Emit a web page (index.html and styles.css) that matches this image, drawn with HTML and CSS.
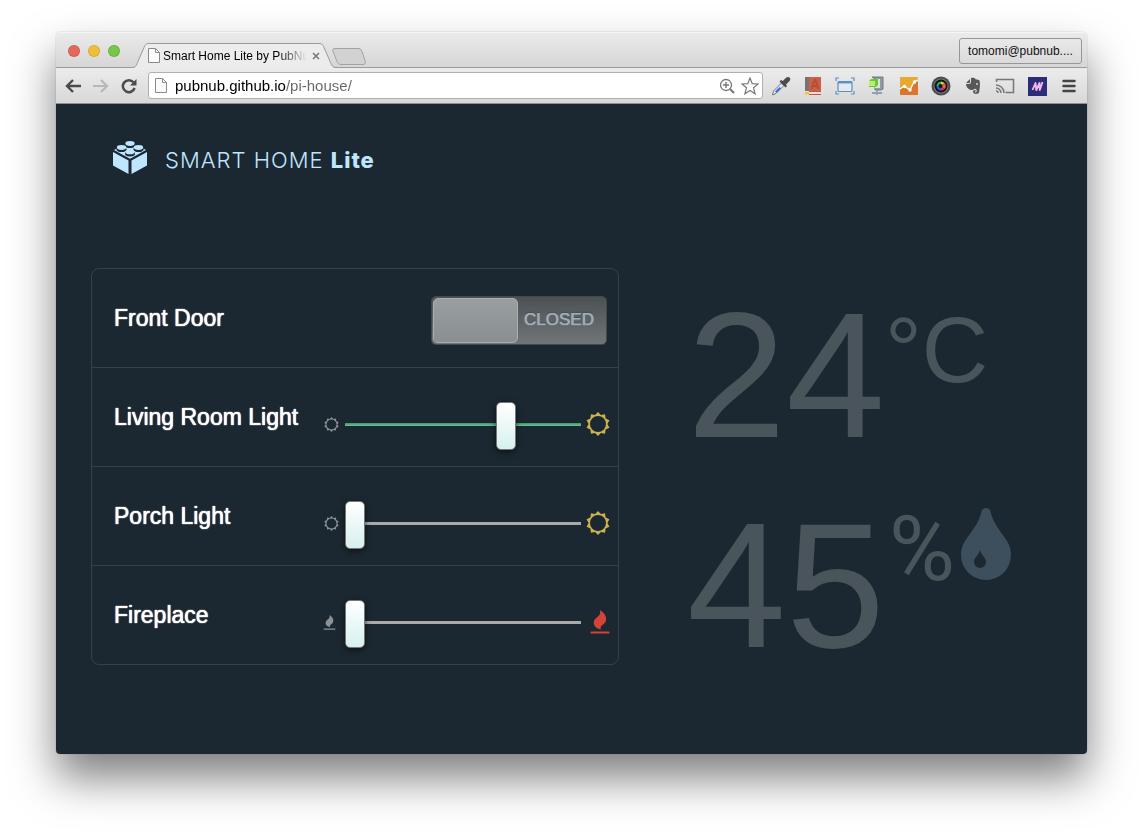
FILE: index.html
```html
<!DOCTYPE html>
<html lang="en">
<head>
  <meta charset="UTF-8" />
  <meta name="viewport" content="width=device-width, initial-scale=1" />
  <title>Smart Home Lite by PubNub</title>
  <link rel="stylesheet" href="styles.css">
</head>
<body>
  <!-- shared shapes -->
  <svg class="sprite" aria-hidden="true">
    <symbol id="page" viewBox="0 0 12 15">
      <path d="M.5.5h7l4 4v10H.5z" fill="#fbfbfb" stroke="#8a8a8a"/>
      <path d="M7.500.5v4h4" fill="none" stroke="#8a8a8a"/>
    </symbol>
    <symbol id="sun" viewBox="0 0 24 24">
      <path fill="currentColor" fill-rule="evenodd" d="M12 0L14.900 3.060 19.050 2.290 19.600 6.470 23.410 8.290 21.400 12 23.410 15.710 19.600 17.530 19.050 21.710 14.900 20.940 12 24 9.100 20.940 4.950 21.710 4.400 17.530.590 15.710 2.600 12 .590 8.290 4.400 6.470 4.950 2.290 9.100 3.060zM12 4a8 8 0 1 0 0 16 8 8 0 0 0 0-16z"/>
    </symbol>
    <symbol id="flame" viewBox="0 0 20 25">
      <path fill="currentColor" d="M9.800 0c4 2.500 7 5.500 6.500 10.500-.4 3.700-3.800 4.700-5.300 6.800-.6.900-.5 2 .1 3.200C6 19 3 16.500 3.500 12.500c.5-4 5.200-5.500 6.300-8.100.6-1.500.5-3 0-4.400z"/>
      <rect x="0" y="22.500" width="20" height="2" rx="1" fill="currentColor"/>
    </symbol>
  </svg>

  <div class="window">
    <div class="tabstrip">
      <div class="lights">
        <span class="light red"></span>
        <span class="light yellow"></span>
        <span class="light green"></span>
      </div>
      <div class="tab">
        <svg class="tab-shape" viewBox="0 0 211 26" aria-hidden="true">
          <path d="M0 25c4 0 5-1 6.500-5L13 4.500C14 1.500 15 .5 18 .5h170c3 0 4 1 5 4l6.500 15.500c1.500 4 3 5 7 5h4.500v1H0z" fill="#ececec"/>
          <path d="M0 24.500c4 0 5-1 6.500-5L13 4.500C14 1.500 15 .5 18 .5h170c3 0 4 1 5 4l6.500 15c1.500 4 3 5 7 5h4.500" fill="none" stroke="#9b9b9b"/>
        </svg>
        <svg class="page-icon"><use href="#page"/></svg>
        <span class="tab-title">Smart Home Lite by PubNub</span>
        <button class="tab-close" aria-label="Close tab">
          <svg width="8" height="8" viewBox="0 0 8 8"><path d="M1 1l6 6M7 1L1 7" stroke="#777" stroke-width="1.600"/></svg>
        </button>
      </div>
      <button class="new-tab" aria-label="New tab">
        <svg width="34" height="17" viewBox="0 0 34 17"><path d="M3 .5h23c2 0 3 .5 4 3l3 9c1 3 0 4-2 4H9c-2 0-3-1-4-3L1 3.500C.3 1.500 1 .5 3 .5z" fill="#d2d2d2" stroke="#a2a2a2"/></svg>
      </button>
      <button class="profile">tomomi@pubnub....</button>
    </div>

    <div class="toolbar">
      <div class="nav">
        <button aria-label="Back"><svg width="16" height="14" viewBox="0 0 16 14"><path d="M8 1L2 7l6 6M2 7h14" fill="none" stroke="#4b4b4b" stroke-width="2.400"/></svg></button>
        <button aria-label="Forward"><svg width="16" height="14" viewBox="0 0 16 14"><path d="M8 1l6 6-6 6M14 7H0" fill="none" stroke="#b8b8b8" stroke-width="2.200"/></svg></button>
        <button aria-label="Reload"><svg width="16" height="16" viewBox="0 0 16 16"><path d="M12.500 4.300A6 6 0 1 0 13.600 10" fill="none" stroke="#4b4b4b" stroke-width="2.500"/><path d="M15.500 1v6.500H9z" fill="#4b4b4b"/></svg></button>
      </div>
      <div class="omnibox">
        <svg class="page-icon"><use href="#page"/></svg>
        <input class="url" type="text" aria-label="Address" value="pubnub.github.io/pi-house/">
        <svg width="16" height="16" viewBox="0 0 16 16" fill="none" stroke="#777"><circle cx="7" cy="7" r="5.500" stroke-width="1.300"/><path d="M4 7h6M7 4v6" stroke-width="1.400"/><path d="M11 11l4 4" stroke-width="2.200"/></svg>
        <svg width="18" height="18" viewBox="0 0 18 18"><path d="M9 1l2.200 5.700 6 .3-4.700 3.800 1.600 6L9 13.400l-5.100 3.400 1.600-6L.8 7l6-.3z" fill="#fff" stroke="#777" stroke-width="1.200"/></svg>
      </div>
      <div class="extensions">
        <button aria-label="Color picker"><svg viewBox="0 0 20 20"><path d="M1.500 19l1-4 8-8 2.500 2.500-8 8z" fill="#dfe7f5" stroke="#777"/><path d="M4 15.500l4.500-4.500 1.500 1.500-4.500 4.500z" fill="#3e70dc"/><path d="M8.500 5.500l6 6 1.500-1.500-1-1.500 3.500-3.500c1.200-1.200.9-2.700 0-3.500s-2.200-.9-3.500.2L11.800 5l-1.800-1z" fill="#4c4c50"/></svg></button>
        <button aria-label="Dictionary"><svg viewBox="0 0 20 20"><path d="M2 1h16v14H2z" fill="#cd5f46"/><path d="M2 1h4v15H2z" fill="#777274"/><path d="M2 15h16v4H2z" fill="#e8dfda"/><path d="M6 15h12v1H6zM6 18h12v1H6z" fill="#c4563f"/><path d="M2 16h4v3l-2-1-2 1z" fill="#efc234"/><path d="M8.500 13l3-9h1l3 9M9.500 10h5" fill="none" stroke="#b14e3a" stroke-width="1.800"/></svg></button>
        <button aria-label="Window resizer"><svg viewBox="0 0 20 20" fill="none" stroke="#5c8fc4"><rect x="3" y="5.500" width="14" height="10" rx="1" fill="#e3e9ef" stroke-width="1.200"/><path d="M3 6.500h14" stroke-width="1.800"/><path d="M1 5V2h3M16 2h3v3M19 15v3h-3M4 18H1v-3" stroke-width="1.200"/></svg></button>
        <button aria-label="Download manager"><svg viewBox="0 0 20 20"><path d="M5 1h11v12l-2 1H8V3z" fill="#8d9ba2" stroke="#6c7b84"/><path d="M8 3h5v9H8z" fill="#d9e2e4"/><path d="M2 5l2-2h7v6l-2 2H2z" fill="#6cc92c"/><path d="M2 5h6v5H2z" fill="#b4ee78"/><path d="M10 14v5M5 17h10" stroke="#8fa2ae" stroke-width="1.800"/></svg></button>
        <button aria-label="Analytics"><svg viewBox="0 0 20 20"><rect x="1" y="1" width="18" height="18" rx="1" fill="#e8a92f"/><path d="M1 13l4-2 6 3 5-9 3-2v15c0 .6-.4 1-1 1H2c-.6 0-1-.4-1-1z" fill="#dd742d"/><path d="M1 13l4-3 6 4 4-8 4-2" fill="none" stroke="#fff" stroke-width="1.400"/><circle cx="5.500" cy="10.500" r="1.700" fill="#fff"/><circle cx="11" cy="14" r="1.700" fill="#fff"/><circle cx="15.500" cy="6" r="1.700" fill="#fff"/></svg></button>
        <button aria-label="Camera"><svg viewBox="0 0 20 20"><circle cx="10" cy="10" r="9.500" fill="#4b4c4e"/><circle cx="10" cy="10" r="7.500" fill="#77787b"/><circle cx="10" cy="10" r="6.500" fill="#151518"/><path d="M10 10V5.500a5 5 0 0 1 3.500 1.500z" fill="#e7ce30"/><path d="M10 10l3.500-3a4 4 0 0 1 0 6z" fill="#e5682e"/><path d="M10 10l3.500 3a5 5 0 0 1-4.500 1.500z" fill="#d72d91"/><path d="M10 10l-1 4.500A5 5 0 0 1 5.500 10z" fill="#2864dc"/><path d="M10 10H5.500A5 5 0 0 1 10 5.500z" fill="#24b769"/><circle cx="9.500" cy="10" r="2" fill="#101014"/></svg></button>
        <button aria-label="Clipper"><svg viewBox="0 0 20 20"><path d="M3 7l4-4v3c0 .6-.4 1-1 1zM8 2c2-.5 4 0 4.500 1.200 2 .2 3.500.4 4 1.300.8 3 .5 8-.5 12-.4 1.500-3.500 1.800-5 1-1.500-.9-1-3.500.5-3.500h1v1.400c-1.300 0-1.300 1 0 1 2 0 1.500-3.600-.5-3.600-1 0-1.200 1.200-2.500 1.200C6 14 3.500 12 3 8h3c1.200 0 2-.8 2-2z" fill="#585858"/><circle cx="14" cy="8" r=".9" fill="#ddd"/></svg></button>
        <button aria-label="Cast"><svg viewBox="0 0 20 20" fill="none" stroke="#777" stroke-width="1.500"><path d="M1.500 6V3.500h17v13h-8"/><path d="M1 9a8 8 0 0 1 8 8M1 12a5 5 0 0 1 5 5M1 15a2 2 0 0 1 2 2"/></svg></button>
        <button aria-label="Memo"><svg viewBox="0 0 20 20"><rect width="19" height="19" x="1" y="1" fill="#2c2c78"/><path d="M5.500 14L8.500 7l.8 7L12.500 7l.3 7L15.500 6" fill="none" stroke="#f0b4f0" stroke-width="1.900" stroke-linejoin="round"/></svg></button>
        <button aria-label="Menu"><svg viewBox="0 0 20 20"><path d="M4.500 5h11M4.500 10h11M4.500 15h11" stroke="#484444" stroke-width="2.500" stroke-linecap="round"/></svg></button>
      </div>
    </div>

    <main class="app">
      <header class="brand">
        <svg width="34" height="34" viewBox="0 0 34 34" fill="#bfe6ff" aria-hidden="true">
          <path d="M0 11l15.500 8.500V33L0 24.500zM34 11l-15.500 8.500V33L34 24.500z"/>
          <path d="M1 9l4-2 12-4 12 4 4 2-16 8.800z"/>
          <g fill="#1c2831">
            <ellipse cx="17" cy="4.200" rx="5" ry="2.800"/>
            <ellipse cx="8.500" cy="8.200" rx="5" ry="2.800"/>
            <ellipse cx="25.500" cy="8.200" rx="5" ry="2.800"/>
            <ellipse cx="17" cy="12.700" rx="5" ry="2.700"/>
          </g>
          <ellipse cx="17" cy="2.500" rx="4.600" ry="2.400"/>
          <ellipse cx="8.500" cy="6.500" rx="4.600" ry="2.400"/>
          <ellipse cx="25.500" cy="6.500" rx="4.600" ry="2.400"/>
          <ellipse cx="17" cy="11" rx="4.600" ry="2.300"/>
        </svg>
        <h1>SMART HOME <strong>Lite</strong></h1>
      </header>

      <div class="dashboard">
        <section class="panel">
          <div class="row">
            <label for="door">Front Door</label>
            <div class="toggle">
              <input type="checkbox" id="door">
              <span class="toggle-text">CLOSED</span>
            </div>
          </div>
          <div class="row">
            <label for="living">Living Room Light</label>
            <div class="dimmer">
              <svg class="icon-min"><use href="#sun"/></svg>
              <input class="slider on" type="range" id="living" min="0" max="100" value="70">
              <svg class="icon-max sun"><use href="#sun"/></svg>
            </div>
          </div>
          <div class="row">
            <label for="porch">Porch Light</label>
            <div class="dimmer">
              <svg class="icon-min"><use href="#sun"/></svg>
              <input class="slider" type="range" id="porch" min="0" max="100" value="0">
              <svg class="icon-max sun"><use href="#sun"/></svg>
            </div>
          </div>
          <div class="row">
            <label for="fireplace">Fireplace</label>
            <div class="dimmer">
              <svg class="icon-min flame"><use href="#flame"/></svg>
              <input class="slider" type="range" id="fireplace" min="0" max="100" value="0">
              <svg class="icon-max fire"><use href="#flame"/></svg>
            </div>
          </div>
        </section>

        <section class="readings">
          <div class="reading">
            <span class="value">24</span><span class="unit">°C</span>
          </div>
          <div class="reading">
            <span class="value">45</span><span class="unit percent">%</span>
            <svg class="drop" viewBox="0 0 50 72" aria-hidden="true"><path fill="#3d4f5c" fill-rule="evenodd" d="M25 0c-2.500 0-4 1.500-4.600 4C18 15 10 24 4 33c-2.700 4-4 9-4 14a25 25 0 0 0 50 0c0-5-1.300-10-4-14C40 24 32 15 29.600 4 29 1.500 27.500 0 25 0zM19 42c1 5 6 7.500 6 12a6 6 0 0 1-12 0c0-4.500 5-7 6-12z"/></svg>
          </div>
        </section>
      </div>
    </main>
  </div>
</body>
</html>
```

FILE: styles.css
```css
* {
  box-sizing: border-box;
  margin: 0;
  padding: 0;
}
body {
  background: #fff;
  padding: 32px 56px 80px;
  font-family: "Liberation Sans", Helvetica, Arial, sans-serif;
}
button {
  background: none;
  border: none;
  font-family: inherit;
}
svg {
  display: block;
  flex-shrink: 0;
}
.sprite {
  position: absolute;
  width: 0;
  height: 0;
}

/* Browser window */
.window {
  border-radius: 5px 5px 4px 4px;
  box-shadow: 0 24px 44px rgba(0, 0, 0, 0.5), 0 0 1px rgba(0, 0, 0, 0.5);
}
.tabstrip {
  display: flex;
  align-items: center;
  height: 36px;
  padding: 0 5px 0 12px;
  border-bottom: 1px solid #9b9b9b;
  border-radius: 5px 5px 0 0;
  background: linear-gradient(#ebebeb, #d6d6d6);
  box-shadow: inset 0 1px 0 #f6f6f6;
}
.lights {
  display: flex;
  gap: 8px;
  padding-top: 3px;
}
.light {
  width: 12px;
  height: 12px;
  border-radius: 50%;
  border: 1px solid rgba(0, 0, 0, 0.1);
}
.red {
  background: #e4695c;
}
.yellow {
  background: #f0bf38;
}
.green {
  background: #77c748;
}
.tab {
  position: relative;
  display: flex;
  align-items: center;
  align-self: flex-end;
  width: 211px;
  height: 25px;
  margin: 0 -10px -1px 11px;
  padding: 0 22px 0 17px;
}
.tab-shape {
  position: absolute;
  left: 0;
  top: 0;
  width: 211px;
  height: 26px;
}
.page-icon {
  position: relative;
  width: 12px;
  height: 15px;
}
.tab-title {
  position: relative;
  flex: 1;
  margin-left: 3px;
  font-size: 12px;
  line-height: 16px;
  white-space: nowrap;
  overflow: hidden;
  mask-image: linear-gradient(90deg, #000 115px, transparent 144px);
}
.tab-close {
  position: relative;
  padding: 0 0 0 4px;
}
.new-tab {
  align-self: flex-start;
  margin-top: 16px;
}
.profile {
  width: 123px;
  height: 26px;
  margin: 2px 0 0 auto;
  border: 1px solid #979797;
  border-radius: 3px;
  background: linear-gradient(#e9e9e9, #dadada);
  font-size: 12px;
  color: #111;
  white-space: nowrap;
}
.toolbar {
  display: flex;
  align-items: center;
  height: 36px;
  padding: 0 8px 0 9px;
  background: linear-gradient(#ececec, #d8d8d8);
  border-bottom: 1px solid #8f8f8f;
}
.nav {
  display: flex;
  align-items: center;
  gap: 12px;
}
.omnibox {
  display: flex;
  align-items: center;
  flex: 1;
  gap: 6px;
  height: 27px;
  margin-left: 11px;
  padding: 0 3px 0 6px;
  background: #fff;
  border: 1px solid #b0b0b0;
  border-radius: 3px;
}
.url {
  flex: 1;
  min-width: 0;
  height: 24px;
  margin-left: 2px;
  border: none;
  outline: none;
  font: 15px "Liberation Sans", Arial, sans-serif;
  color: transparent;
  background: linear-gradient(90deg, #000 111px, #666 111px);
  -webkit-background-clip: text;
  background-clip: text;
}
.extensions {
  display: flex;
  gap: 12px;
  margin-left: 8px;
}
.extensions svg {
  width: 20px;
  height: 20px;
}

/* Dashboard page */
.app {
  min-height: 650px;
  padding: 36px 35px 80px;
  border-radius: 0 0 4px 4px;
  background: #1c2831;
}
.brand {
  display: flex;
  align-items: center;
  gap: 18px;
  height: 36px;
  margin-left: 22px;
}
.brand h1 {
  padding-top: 4px;
  font-family: Inter, "Liberation Sans", sans-serif;
  font-size: 22px;
  font-weight: 300;
  letter-spacing: 1px;
  color: #bfe6ff;
}
.brand strong {
  font-weight: 800;
}
.dashboard {
  display: flex;
  align-items: flex-start;
  margin-top: 92px;
}
.panel {
  flex: 0 1 528px;
  border: 1px solid #33414a;
  border-radius: 8px;
}
.row {
  display: flex;
  align-items: center;
  justify-content: space-between;
  height: 98px;
  padding: 0 8px 0 22px;
}
.row + .row {
  height: 99px;
  border-top: 1px solid #33414a;
}
.row label {
  font-size: 23px;
  color: #fff;
  text-shadow: 0 0 1px #fff, 0 0 1px #fff;
}
.toggle {
  display: flex;
  align-items: center;
  width: 176px;
  height: 49px;
  margin: 4px 3px 0 0;
  padding: 1px;
  border: 1px solid #43494c;
  border-radius: 5px;
  background: linear-gradient(#4c5153, #707577);
}
.toggle input {
  appearance: none;
  width: 85px;
  height: 45px;
  border: 1px solid #a9afb1;
  border-radius: 5px;
  background: linear-gradient(#999ea1, #8a9092);
}
.toggle-text {
  flex: 1;
  padding-right: 5px;
  text-align: center;
  font-size: 17px;
  color: #a3acb3;
  text-shadow: 0 0 1px #a3acb3, 0 0 1px #a3acb3, 0 -1px 1px #1f3a50;
}
.dimmer {
  display: flex;
  align-items: center;
  gap: 5px;
  padding-top: 14px;
}
.icon-min {
  width: 15px;
  height: 15px;
  margin-right: 1px;
  color: #8b9194;
}
.flame {
  margin-right: 3px;
}
.icon-max {
  width: 24px;
  height: 24px;
}
.sun {
  color: #cbb24f;
}
.fire {
  margin: 0 -2px 0 2px;
  color: #d64238;
}
.slider {
  appearance: none;
  width: 236px;
  height: 48px;
  background: none;
}
.slider::-webkit-slider-runnable-track {
  height: 3px;
  background: #aaa;
}
.slider.on::-webkit-slider-runnable-track {
  background: linear-gradient(#3f9469, #6cc598);
}
.slider::-webkit-slider-thumb {
  appearance: none;
  width: 20px;
  height: 48px;
  margin-top: -21px;
  border: 1px solid #777;
  border-radius: 5px;
  background: linear-gradient(#fff, #d6f0ef);
  box-shadow: 0 2px 6px rgba(0, 0, 0, 0.6);
}

/* Temperature and humidity */
.readings {
  flex: 1;
  padding: 28px 0 0 68px;
  color: #4a555b;
}
.reading {
  display: flex;
  align-items: flex-start;
}
.reading + .reading {
  margin-top: 50px;
}
.value {
  font-size: 178px;
  line-height: 160px;
}
.unit {
  font-size: 92px;
  line-height: 108px;
}
.percent {
  padding-left: 4px;
  font-family: "Liberation Sans Narrow", Roboto, sans-serif;
  font-size: 90px;
  font-weight: 400;
  line-height: 88px;
}
.drop {
  width: 50px;
  height: 72px;
  margin: 2px 0 0 6px;
}
```
